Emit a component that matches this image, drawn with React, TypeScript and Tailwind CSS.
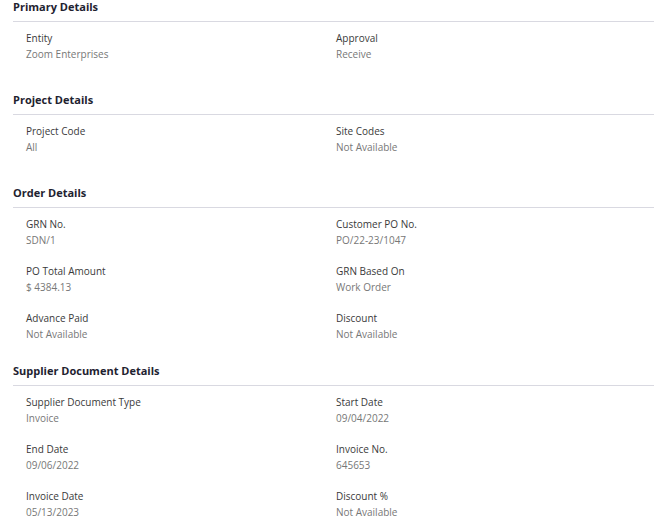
import React from "react";

type Field = { label: string; value: string };

type Section = { title: string; fields: Field[] };

const sections: Section[] = [
  {
    title: "Primary Details",
    fields: [
      { label: "Entity", value: "Zoom Enterprises" },
      { label: "Approval", value: "Receive" },
    ],
  },
  {
    title: "Project Details",
    fields: [
      { label: "Project Code", value: "All" },
      { label: "Site Codes", value: "Not Available" },
    ],
  },
  {
    title: "Order Details",
    fields: [
      { label: "GRN No.", value: "SDN/1" },
      { label: "Customer PO No.", value: "PO/22-23/1047" },
      { label: "PO Total Amount", value: "$ 4384.13" },
      { label: "GRN Based On", value: "Work Order" },
      { label: "Advance Paid", value: "Not Available" },
      { label: "Discount", value: "Not Available" },
    ],
  },
  {
    title: "Supplier Document Details",
    fields: [
      { label: "Supplier Document Type", value: "Invoice" },
      { label: "Start Date", value: "09/04/2022" },
      { label: "End Date", value: "09/06/2022" },
      { label: "Invoice No.", value: "645653" },
      { label: "Invoice Date", value: "05/13/2023" },
      { label: "Discount %", value: "Not Available" },
    ],
  },
];

const DetailsSection = ({ section }: { section: Section }) => {
  return (
    <div>
      <div className="ml-[13px] border-b border-[#d9d9e1] h-[22px] text-[11px] leading-[14px] font-bold text-[#1e2230]">
        {section.title}
      </div>
      <div className="grid grid-cols-[310px_1fr] gap-y-[14px] pl-[26px] pt-2 pb-[21px] min-h-[71px] content-start">
        {section.fields.map((field, index) => (
          <div key={index} className="flex flex-col text-[10px]">
            <span className="leading-[16px] text-[#3a3a3a]">{field.label}</span>
            <span className="leading-[17px] text-[#777777]">{field.value}</span>
          </div>
        ))}
      </div>
    </div>
  );
};

const App = () => {
  return (
    <div className="w-[654px] h-[527px] bg-white overflow-hidden" style={{ fontFamily: '"Open Sans", sans-serif' }}>
      {sections.map((section, index) => (
        <DetailsSection key={index} section={section} />
      ))}
    </div>
  );
};

export default App;
